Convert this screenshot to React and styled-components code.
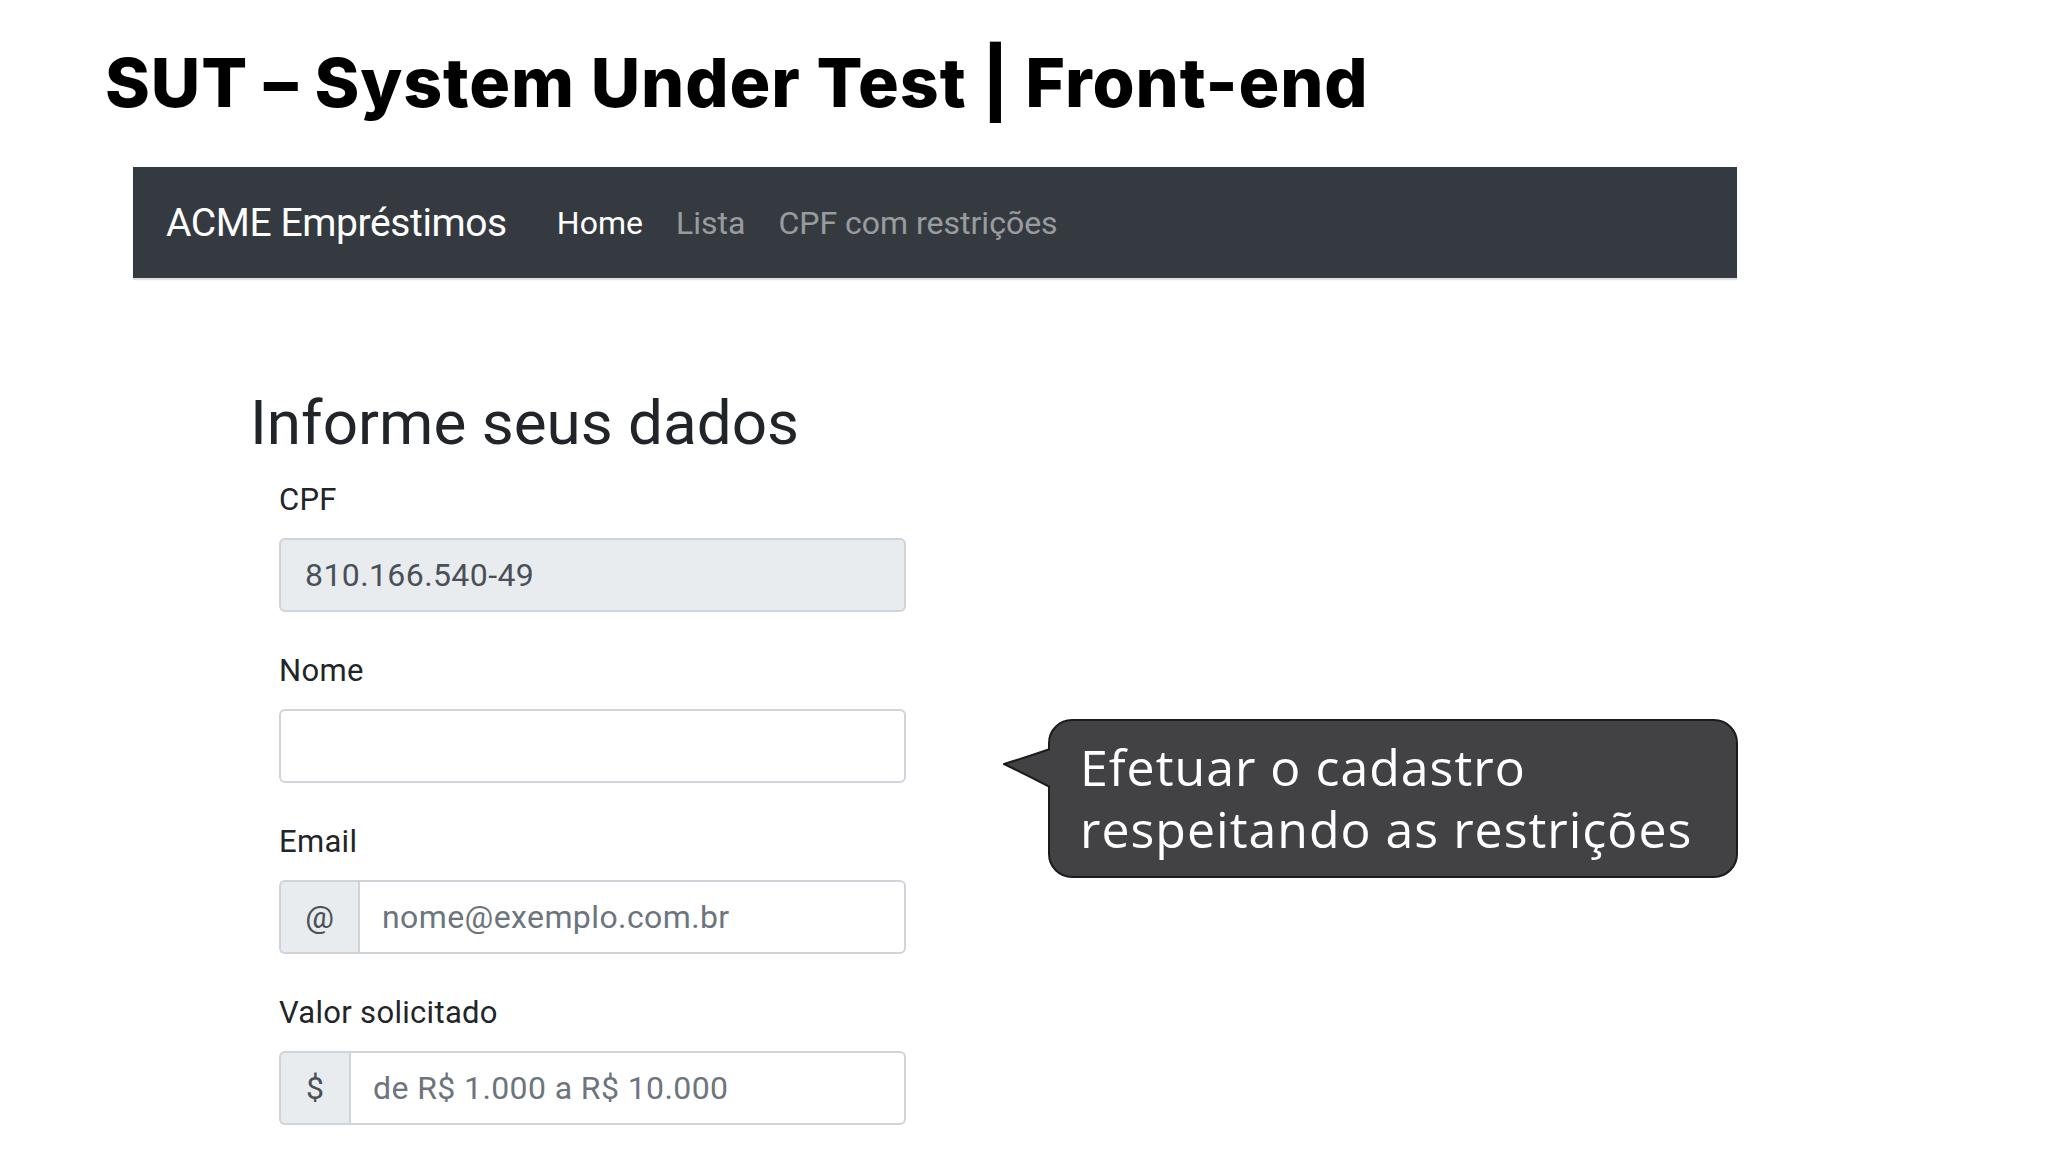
import React from "react";
import styled, { createGlobalStyle } from "styled-components";

const GlobalStyle = createGlobalStyle`
    html, body {
        margin: 0;
        padding: 0;
        background: #ffffff;
    }
    body {
        width: 2048px;
        height: 1152px;
        overflow: hidden;
        font-family: Roboto, "Liberation Sans", sans-serif;
    }
`;

const Slide = styled.div`
    width: 2048px;
    height: 1152px;
    box-sizing: border-box;
    padding: 48px 0 0 105px;
`;

const SlideTitle = styled.h1`
    margin: 0;
    height: 68px;
    font-family: Inter, "Liberation Sans", sans-serif;
    font-weight: 800;
    font-size: 68px;
    line-height: 68px;
    letter-spacing: 0.9px;
    color: #000000;
    white-space: nowrap;
`;

const Navbar = styled.nav`
    display: flex;
    align-items: center;
    margin: 51px 0 0 28px;
    width: 1604px;
    height: 111px;
    box-sizing: border-box;
    padding: 0 0 0 33px;
    background: #343a40;
    box-shadow: 0 2px 1px rgba(0, 0, 0, 0.12);
`;

const Brand = styled.a`
    font-size: 39px;
    letter-spacing: -0.4px;
    color: #ffffff;
    margin-right: 50px;
    white-space: nowrap;
`;

const NavLinks = styled.div`
    display: flex;
    gap: 33px;
`;

const NavLink = styled.a`
    font-size: 32px;
    color: ${(p) => (p.active ? "#ffffff" : "rgba(255, 255, 255, 0.5)")};
    white-space: nowrap;
`;

const Content = styled.main`
    padding: 0 0 0 145px;
`;

const Heading = styled.h2`
    margin: 109px 0 0 0;
    font-size: 62px;
    line-height: 72px;
    font-weight: 400;
    color: #212529;
`;

const Row = styled.div`
    display: flex;
    margin-top: 23px;
`;

const Form = styled.form`
    width: 627px;
    margin-left: 29px;
`;

const Group = styled.div`
    margin-bottom: 41px;
`;

const Label = styled.label`
    display: block;
    font-size: 31px;
    line-height: 36px;
    letter-spacing: 0.3px;
    color: #212529;
    margin-bottom: 20px;
`;

const InputGroup = styled.div`
    display: flex;
    height: 74px;
`;

const Addon = styled.span`
    display: flex;
    align-items: center;
    justify-content: center;
    width: ${(p) => p.w}px;
    box-sizing: border-box;
    background: #e9ecef;
    border: 2px solid #ced4da;
    border-right: none;
    border-radius: 6px 0 0 6px;
    font-size: 32px;
    color: #495057;
`;

const Input = styled.input`
    flex: 1;
    width: 100%;
    height: 74px;
    box-sizing: border-box;
    padding: 0 ${(p) => (p.addon ? 22 : 24)}px;
    font-family: Roboto, "Liberation Sans", sans-serif;
    font-size: 32px;
    letter-spacing: 0.4px;
    color: #495057;
    background: ${(p) => (p.disabled ? "#e9ecef" : "#ffffff")};
    border: 2px solid #ced4da;
    border-radius: ${(p) => (p.addon ? "0 6px 6px 0" : "6px")};
    outline: none;

    &::placeholder {
        color: #6c757d;
    }
`;

const Aside = styled.div`
    margin-left: 97px;
    padding-top: 237px;
`;

const Bubble = styled.div`
    position: relative;
    margin-left: 45px;
    width: 690px;
    height: 159px;
    box-sizing: border-box;
    padding: 15px 20px 0 30px;
    background: #424244;
    border: 2px solid #1b1b1b;
    border-radius: 24px;
    font-family: "Open Sans", Lato, sans-serif;
    font-size: 50px;
    line-height: 62px;
    letter-spacing: 1px;
    color: #ffffff;
    white-space: nowrap;
`;

const Tail = styled.svg`
    position: absolute;
    left: -47px;
    top: 26px;
`;

function BubbleTail() {
    return (
        <Tail width="52" height="44" viewBox="0 0 52 44">
            <path d="M52 2 L47 2 Q24 10 1 17 Q24 28 47 40 L52 40 Z" fill="#424244" />
            <path d="M47 2 Q24 10 1 17 Q24 28 47 40" fill="none" stroke="#1b1b1b" strokeWidth="2" />
        </Tail>
    );
}

function App() {
    return (
        <Slide>
            <GlobalStyle />
            <SlideTitle>SUT – System Under Test | Front-end</SlideTitle>
            <Navbar>
                <Brand>ACME Empréstimos</Brand>
                <NavLinks>
                    <NavLink active>Home</NavLink>
                    <NavLink>Lista</NavLink>
                    <NavLink>CPF com restrições</NavLink>
                </NavLinks>
            </Navbar>
            <Content>
                <Heading>Informe seus dados</Heading>
                <Row>
                    <Form>
                        <Group>
                            <Label>CPF</Label>
                            <InputGroup>
                                <Input disabled value="810.166.540-49" readOnly />
                            </InputGroup>
                        </Group>
                        <Group>
                            <Label>Nome</Label>
                            <InputGroup>
                                <Input />
                            </InputGroup>
                        </Group>
                        <Group>
                            <Label>Email</Label>
                            <InputGroup>
                                <Addon w={79}>@</Addon>
                                <Input addon placeholder="nome@exemplo.com.br" />
                            </InputGroup>
                        </Group>
                        <Group>
                            <Label>Valor solicitado</Label>
                            <InputGroup>
                                <Addon w={70}>$</Addon>
                                <Input addon placeholder="de R$ 1.000 a R$ 10.000" />
                            </InputGroup>
                        </Group>
                    </Form>
                    <Aside>
                        <Bubble>
                            <BubbleTail />
                            Efetuar o cadastro
                            <br />
                            respeitando as restrições
                        </Bubble>
                    </Aside>
                </Row>
            </Content>
        </Slide>
    );
}

export default App;
